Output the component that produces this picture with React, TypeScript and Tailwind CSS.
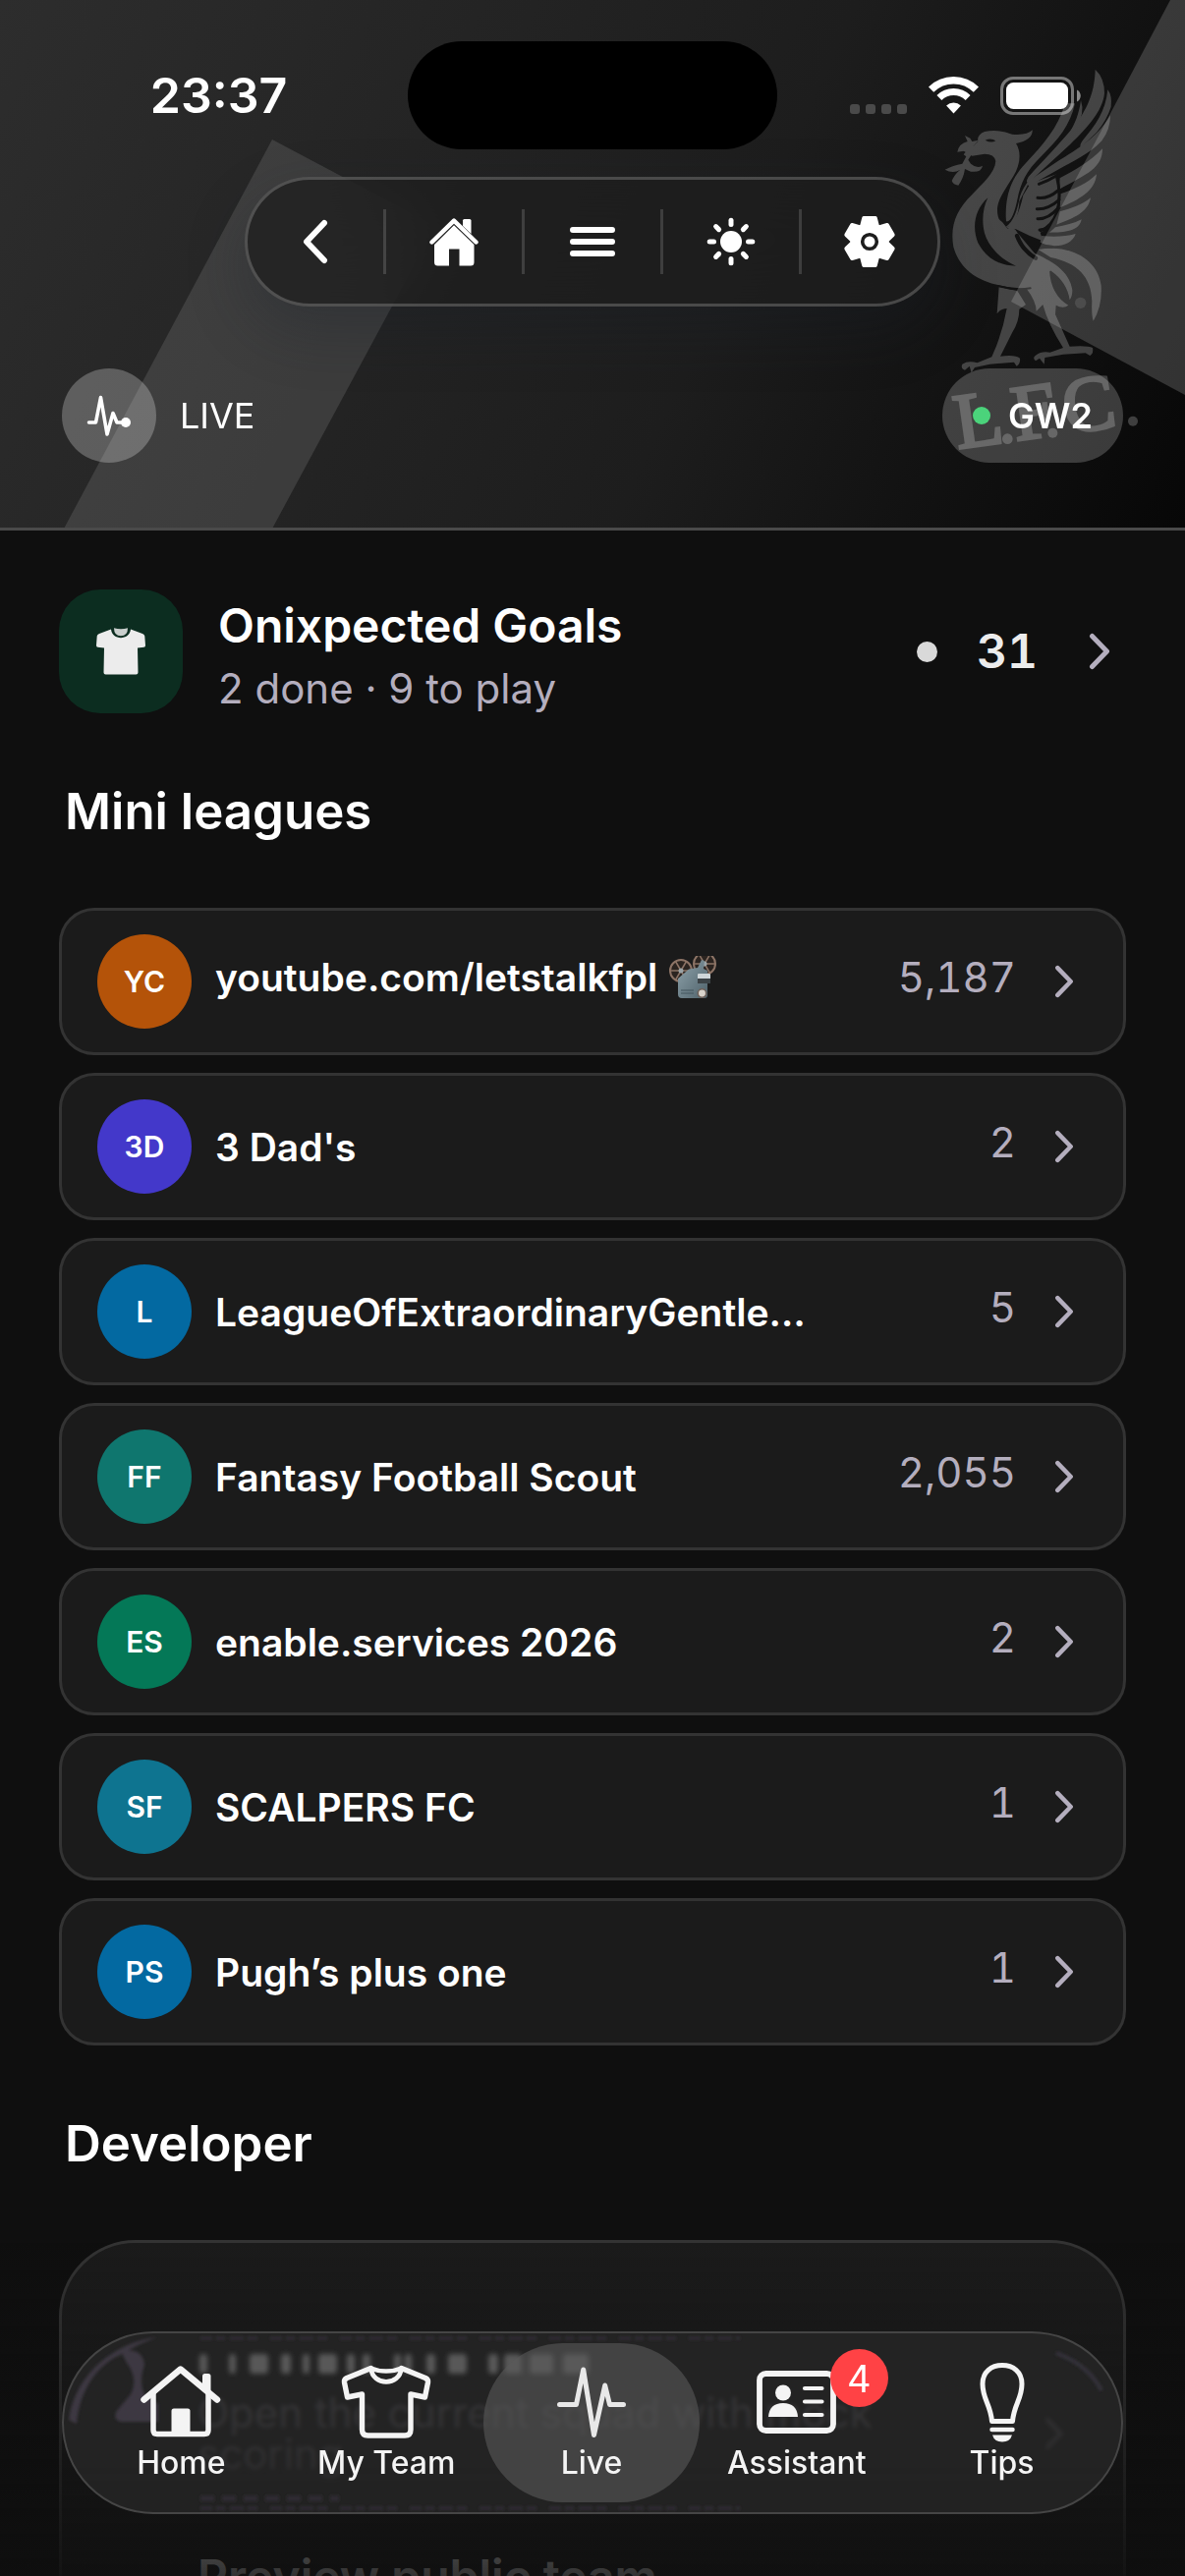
import React from "react";

type League = {
  initials: string;
  name: string;
  rank: string;
  color: string;
  projector?: boolean;
};

const leagues: League[] = [
  { initials: "YC", name: "youtube.com/letstalkfpl", rank: "5,187", color: "bg-[#b45309]", projector: true },
  { initials: "3D", name: "3 Dad's", rank: "2", color: "bg-[#4338ca]" },
  { initials: "L", name: "LeagueOfExtraordinaryGentlemen", rank: "5", color: "bg-[#0369a1]" },
  { initials: "FF", name: "Fantasy Football Scout", rank: "2,055", color: "bg-[#0f766e]" },
  { initials: "ES", name: "enable.services 2026", rank: "2", color: "bg-[#047857]" },
  { initials: "SF", name: "SCALPERS FC", rank: "1", color: "bg-[#0e7490]" },
  { initials: "PS", name: "Pugh’s plus one", rank: "1", color: "bg-[#0369a1]" },
];

/* ---------- status bar ---------- */

function WifiIcon() {
  return (
    <svg width="51" height="38" viewBox="0 0 51 38" fill="none" stroke="#fff" aria-hidden="true">
      <path d="M2.6 13.2a32.5 32.5 0 0 1 45.8 0" strokeWidth="7.4" />
      <path d="M10.9 21.6a20.8 20.8 0 0 1 29.2 0" strokeWidth="7" />
      <path d="M25.5 37.6l-7.4-8a10.6 10.6 0 0 1 14.8 0z" fill="#fff" stroke="none" />
    </svg>
  );
}

function BatteryIcon() {
  return (
    <svg width="82" height="39" viewBox="0 0 82 39" aria-hidden="true">
      <rect x="1.5" y="1.5" width="72" height="36" rx="11.5" fill="none" stroke="#fff" strokeOpacity=".42" strokeWidth="3" />
      <rect x="6" y="6" width="63" height="27" rx="7.5" fill="#fff" />
      <path d="M78 13.5c5 2 5 10 0 12z" fill="#fff" fillOpacity=".5" />
    </svg>
  );
}

/* ---------- header drawings ---------- */

function Beams() {
  return (
    <svg
      className="pointer-events-none absolute inset-0 h-full w-full"
      viewBox="0 0 1206 537"
      preserveAspectRatio="xMaxYMin slice"
      aria-hidden="true"
    >
      <path d="M277 142L443 230 276 540H64z" fill="#fff" fillOpacity=".115" />
      <path d="M1191 0L1029 307 1206 402V0z" fill="#fff" fillOpacity=".17" />
    </svg>
  );
}

function Crest() {
  return (
    <svg
      className="pointer-events-none absolute right-0 top-[40px]"
      width="286"
      height="440"
      viewBox="0 0 858 1320"
      aria-hidden="true"
    >
      <defs>
        <mask id="crest-cuts" maskUnits="userSpaceOnUse" x="0" y="0" width="858" height="1320">
          <rect width="858" height="1320" fill="#fff" />
          <path d="M256 484C215 520 207 575 226 622C250 668 292 692 342 692C296 672 258 634 246 592C236 552 242 512 256 484z" fill="#000" />
          <path d="M248 308q18-8 32 2q-14 8-32-2z" fill="#000" />
          <g fill="none" stroke="#000" strokeWidth="9" strokeLinecap="round">
            <path d="M345 600Q362 645 402 668" strokeWidth="13" />
            <path d="M365 598Q400 632 452 634" strokeWidth="9" />
            <path d="M412 442Q440 432 466 416" />
            <path d="M466 416Q482 480 466 530Q452 570 418 584" />
            <path d="M408 484Q440 488 470 462" />
            <path d="M406 518Q440 520 474 490" />
            <path d="M408 548Q440 550 470 516" />
            <path d="M414 582Q442 582 460 552" />
            <path d="M290 754Q340 768 386 760" strokeWidth="6" />
          </g>
        </mask>
      </defs>
      <g fill="#fff" opacity=".21">
        <g mask="url(#crest-cuts)">
          {/* head, neck and breast */}
          <path d="M392 277Q394 308 342 318C360 346 354 386 334 418C310 458 288 486 285 516Q284 552 300 558L316 578Q334 568 346 590L400 655L448 706L386 760Q338 764 296 752C218 738 168 696 151 634C140 570 160 520 208 474C240 440 278 408 280 372Q276 350 246 350L208 356L180 340Q186 330 212 326L226 312Q222 292 246 282Q290 274 330 290Q376 294 392 277z" />
          {/* beak and sprig */}
          <path d="M163 344Q168 318 194 312L186 294L202 302L208 312L228 308L212 326L210 346L196 368L204 380Q222 396 240 386Q236 408 204 404L186 396Q182 424 166 446Q150 444 146 432Q156 410 172 398Q150 412 125 398Q150 384 178 380L190 358L182 352L192 340z" />
          {/* long primaries */}
          <path d="M312 556C308 486 322 430 372 378C424 322 470 272 492 196L522 196C508 262 470 308 420 356C372 402 356 440 346 490C338 530 326 560 312 556z" />
          <path d="M310 574C336 556 346 520 354 480C366 442 396 412 432 374C488 318 530 266 540 186Q554 226 524 272C500 316 430 388 386 428L352 496C350 540 336 574 310 574z" />
          <path d="M584 92Q612 118 612 164C608 216 560 270 508 320L380 438Q370 438 380 420C420 376 474 322 522 262C556 216 582 168 584 92z" />
          <path d="M622 154Q636 172 632 206Q620 246 588 284L540 330Q534 324 546 308C584 264 616 220 622 154z" />
          <path d="M630 232Q630 276 604 310C562 354 512 374 474 396L382 448Q368 442 390 426L470 372C530 336 590 300 630 232z" />
          {/* secondaries */}
          <path d="M606 334C606 392 560 412 474 458L476 424C520 400 566 376 606 334z" />
          <path d="M588 412C584 462 536 490 476 514L478 472C520 458 560 440 588 412z" />
          <path d="M570 484C562 528 520 546 466 566L476 526C510 516 544 506 570 484z" />
          <path d="M542 550C536 586 490 590 444 590L462 574C492 568 520 562 542 550z" />
          <path d="M524 594C512 632 456 640 416 620L420 600C460 604 494 602 524 594z" />
          {/* coverts */}
          <path d="M364 476L386 440L466 412Q486 470 466 530Q452 574 416 590L424 616Q380 600 342 580L312 576Q346 560 364 476z" />
          {/* tail */}
          <path d="M410 642C500 624 592 668 602 752Q606 814 578 860Q572 842 574 800C572 724 528 682 448 666z" />
          <path d="M392 650C450 676 506 706 514 766Q514 786 506 796Q498 742 450 708L396 668z" />
          {/* legs and feet */}
          <path d="M290 756L346 768L372 810L352 824Q352 862 330 896L294 968Q340 962 354 974Q356 990 344 998L336 986L262 992L216 1002L206 1018L200 998L186 1010Q172 1004 178 992Q196 980 224 988L268 970Q300 900 314 822Q296 822 284 838z" />
          <path d="M372 758L444 704Q448 780 502 812Q486 824 464 812L462 840L506 938Q560 934 576 942Q580 958 568 966L554 958L486 962L430 972L428 992L414 974L402 982Q390 972 404 964Q418 952 446 956L486 942Q440 870 424 810L404 830Q404 800 372 758z" />
        </g>
        <circle cx="539" cy="805" r="17" opacity=".5" />
        <g
          fontFamily="Liberation Serif, serif"
          fontSize="240"
          stroke="#fff"
          strokeWidth="9"
          transform="rotate(-8 170 1255)"
        >
          <text x="166" y="1250">L</text>
          <text x="344" y="1250">F</text>
          <text x="500" y="1250">C</text>
        </g>
        <circle cx="316" cy="1220" r="16" />
        <circle cx="454" cy="1202" r="15" />
        <circle cx="699" cy="1166" r="15" />
      </g>
    </svg>
  );
}

function BackIcon() {
  return (
    <svg width="26" height="46" viewBox="0 0 26 46" fill="none" stroke="#fff" strokeWidth="6" strokeLinecap="round" strokeLinejoin="round" aria-hidden="true">
      <path d="M22 4L4 23l18 19" />
    </svg>
  );
}

function HouseSolidIcon() {
  return (
    <svg width="50" height="50" viewBox="0 0 50 50" fill="#fff" aria-hidden="true">
      <path d="M2.5 25.5L25 3.6 47.5 25.5" fill="none" stroke="#fff" strokeWidth="4.4" strokeLinecap="round" strokeLinejoin="round" />
      <path d="M34 3.5q0-1.5 1.500-1.500h5.500q1.500 0 1.500 1.500V17L34 9z" />
      <path d="M25 8.300L45.500 28v18q0 3.500-3.500 3.500H30.500V32.500h-10.500v17H8.500q-3.500 0-3.500-3.500V28z" />
    </svg>
  );
}

function MenuIcon() {
  return (
    <svg width="46" height="36" viewBox="0 0 46 36" stroke="#fff" strokeWidth="6" strokeLinecap="round" aria-hidden="true">
      <path d="M3 6h40M3 18h40M3 30h40" />
    </svg>
  );
}

const rayAngles = [0, 45, 90, 135, 180, 225, 270, 315];

function SunIcon() {
  return (
    <svg width="50" height="50" viewBox="-25 -25 50 50" aria-hidden="true">
      <circle r="11" fill="#fff" />
      <g stroke="#fff" strokeWidth="5" strokeLinecap="round">
        {rayAngles.map((a) => (
          <path key={a} d="M0-17.500V-21.800" transform={`rotate(${a})`} />
        ))}
      </g>
    </svg>
  );
}

const toothAngles = [0, 60, 120, 180, 240, 300];

function GearIcon() {
  return (
    <svg width="54" height="54" viewBox="-27 -27 54 54" aria-hidden="true">
      <circle r="19.500" fill="#fff" />
      <g fill="#fff" stroke="#fff" strokeWidth="4" strokeLinejoin="round">
        {toothAngles.map((a) => (
          <path key={a} d="M-5.800-24H5.800L8-15.500H-8z" transform={`rotate(${a})`} />
        ))}
      </g>
      <circle r="7.300" fill="none" stroke="#1d1d1d" strokeWidth="3.600" />
    </svg>
  );
}

function LiveDotIcon() {
  return (
    <svg width="46" height="44" viewBox="0 0 46 44" fill="none" stroke="#fff" strokeWidth="3.600" strokeLinecap="round" strokeLinejoin="round" aria-hidden="true">
      <path d="M2.500 29H9.500L14.500 3.500 21 41 27 19.500 31 29H38" />
      <circle cx="40" cy="29" r="5" fill="#fff" stroke="none" />
    </svg>
  );
}

/* ---------- content drawings ---------- */

function ShirtSolidIcon() {
  return (
    <svg width="52" height="50" viewBox="0 0 52 50" fill="#ececec" aria-hidden="true">
      <path d="M16 2.500C17 14 35 14 36 2.500L48 7q2 .8 2.300 2.600L51 19q0 1.500-1.500 1.700L43 21.500l.5 25q0 2-2 2h-31q-2 0-2-2l.5-25-6.500-.8Q1 20.500 1 19l.7-9.400Q2 7.800 4 7z" />
      <path d="M19 1.200q7 2 14 0q0 8-7 8t-7-8z" opacity=".85" />
    </svg>
  );
}

function Chevron({ large = false }: { large?: boolean }) {
  return (
    <svg
      className={large ? "h-[38px] w-[22px] shrink-0" : "h-[34px] w-[20px] shrink-0"}
      viewBox="0 0 22 38"
      fill="none"
      stroke="#b4aebe"
      strokeWidth="5"
      strokeLinecap="round"
      strokeLinejoin="round"
      aria-hidden="true"
    >
      <path d="M3.500 3.500L18.500 19l-15 15.500" />
    </svg>
  );
}

function Reel({ cx, cy }: { cx: number; cy: number }) {
  return (
    <g stroke="#8d7466" fill="none">
      <circle cx={cx} cy={cy} r="11" strokeWidth="2" fill="#2b2420" />
      <path
        d={`M${cx - 11} ${cy}h22M${cx - 5.500} ${cy - 9.500}l11 19M${cx + 5.500} ${cy - 9.500}l-11 19`}
        strokeWidth="1.500"
      />
      <circle cx={cx} cy={cy} r="2.500" fill="#9aa3a6" stroke="none" />
    </g>
  );
}

function ProjectorIcon() {
  return (
    <svg className="shrink-0" width="48" height="44" viewBox="0 0 48 44" role="img" aria-label="film projector">
      <defs>
        <linearGradient id="projector-body" x1="0" y1="0" x2="1" y2="1">
          <stop offset="0" stopColor="#8fa3ab" />
          <stop offset="1" stopColor="#4f626b" />
        </linearGradient>
      </defs>
      <Reel cx={12} cy={15} />
      <Reel cx={36} cy={8} />
      <path d="M9 23L20 13.500l9-1.500 4-8 3 1-1 8 4 2v25q0 3-3 3H13q-4 0-4-4z" fill="url(#projector-body)" />
      <path d="M12 35h13M12 38h13" stroke="#43545c" strokeWidth="1.200" />
      <rect x="29" y="18" width="13" height="10" rx="1" fill="#cfd6d9" />
      <rect x="29" y="23" width="13" height="5" fill="#3c4347" />
      <circle cx="33.500" cy="38" r="4.200" fill="#d8d3cb" stroke="#6d5f58" strokeWidth="1.500" />
    </svg>
  );
}

/* ---------- tab bar drawings ---------- */

function HomeIcon() {
  return (
    <svg width="82" height="76" viewBox="0 0 82 76" fill="none" stroke="#f4f4f4" aria-hidden="true">
      <path d="M3.500 35.500L40.700 4.500 78 35.500" strokeWidth="6.500" strokeLinecap="round" strokeLinejoin="round" />
      <path d="M13 29v37.500q0 4 4 4h48q4 0 4-4V29" strokeWidth="5.500" />
      <path d="M63 26V11.500q0-2.500 2.500-2.500h3.500q2.500 0 2.500 2.500V33z" fill="#f4f4f4" stroke="none" />
      <path d="M31.500 70V47q0-2.500 2.500-2.500h14q2.500 0 2.500 2.500v23z" fill="#f4f4f4" stroke="none" />
    </svg>
  );
}

function ShirtIcon() {
  return (
    <svg width="92" height="78" viewBox="0 0 92 78" fill="none" stroke="#f4f4f4" strokeWidth="5.400" strokeLinejoin="round" strokeLinecap="round" aria-hidden="true">
      <path d="M30.500 4.500L6 14.500q-3 1.500-2.500 4.500L6.500 34 21.500 31V67q0 6 6 6H65q6 0 6-6V31l14.500 3L88.500 19q.5-3-2.500-4.500L61.500 4.500" />
      <path d="M30.500 4.500C32 23 60 23 61.500 4.500C52 8.500 40 8.500 30.500 4.500" strokeWidth="4.600" />
    </svg>
  );
}

function PulseIcon() {
  return (
    <svg width="70" height="74" viewBox="0 0 70 74" fill="none" stroke="#e8e8e8" strokeWidth="5" strokeLinecap="round" strokeLinejoin="round" aria-hidden="true">
      <path d="M2.500 39.500H19.500L26.700 4 37.500 70.500 48.700 20 53.500 39.500H67.500" />
    </svg>
  );
}

function AssistantIcon() {
  return (
    <svg width="82" height="66" viewBox="0 0 82 66" aria-hidden="true">
      <rect x="3" y="4" width="75" height="58" rx="6.500" fill="none" stroke="#f4f4f4" strokeWidth="5.800" />
      <circle cx="27" cy="23.500" r="8" fill="#f4f4f4" />
      <path d="M12 48q1-14 15-14t15 14z" fill="#f4f4f4" />
      <path d="M49 19h17.500M49 32.500h17.500M49 46h17.500" stroke="#f4f4f4" strokeWidth="4.200" strokeLinecap="round" />
    </svg>
  );
}

function BulbIcon() {
  return (
    <svg width="46" height="82" viewBox="0 0 46 82" fill="none" stroke="#f4f4f4" aria-hidden="true">
      <path d="M12.500 60.500C11 43 3 38 3 22.500C3 10 12 3.500 23 3.500S43 10 43 22.500C43 38 35 43 33.500 60.500z" strokeWidth="5" strokeLinejoin="round" />
      <path d="M12.500 69h21" strokeWidth="4.500" strokeLinecap="round" />
      <path d="M13 74.500h20q-2 7-10 7t-10-7z" fill="#f4f4f4" stroke="none" />
    </svg>
  );
}

const smears = [
  { x: 138, w: 8 },
  { x: 168, w: 7 },
  { x: 189, w: 19 },
  { x: 221, w: 10 },
  { x: 243, w: 7 },
  { x: 259, w: 19 },
  { x: 288, w: 8 },
  { x: 304, w: 8 },
  { x: 336, w: 7 },
  { x: 347, w: 7 },
  { x: 369, w: 9 },
  { x: 391, w: 19 },
  { x: 432, w: 10 },
  { x: 448, w: 18 },
  { x: 474, w: 24 },
  { x: 508, w: 26 },
];

function GlassRefraction() {
  return (
    <svg className="pointer-events-none absolute left-0 top-0 h-full w-full" aria-hidden="true">
      <defs>
        <filter id="smear" x="-20%" y="-50%" width="140%" height="200%">
          <feGaussianBlur stdDeviation="2.5" />
        </filter>
        <filter id="rim" x="-20%" y="-20%" width="140%" height="140%">
          <feGaussianBlur stdDeviation="1.5" />
        </filter>
      </defs>
      <g filter="url(#smear)" fill="#585858">
        {smears.map((s) => (
          <rect key={s.x} x={s.x} y="21" width={s.w} height="20" rx="4" />
        ))}
      </g>
      <g filter="url(#rim)" fill="#3c3842">
        <path d="M95 4C56 8 12 38 5 88L13 92C16 58 34 30 62 20Q76 10 95 4z" />
        <path d="M58 18Q80 14 82 32Q76 50 82 62L96 72V90H58Q50 88 53 80L68 62Q76 46 64 30z" />
      </g>
      <g filter="url(#rim)" fill="none" stroke="#302e36" strokeWidth="3">
        <path d="M139 5H688" strokeDasharray="12 4 9 5 14 4 10 13" />
        <path d="M139 178H688" strokeDasharray="12 4 9 5 14 4 10 13" />
        <path d="M139 168H280" strokeWidth="6" strokeDasharray="14 8" stroke="#2d2b32" />
      </g>
      <path d="M1010 20Q1042 32 1056 58" fill="none" stroke="#34313b" strokeWidth="4" filter="url(#rim)" />
    </svg>
  );
}

const tools = [
  { label: "Back", icon: <BackIcon /> },
  { label: "Home", icon: <HouseSolidIcon /> },
  { label: "Menu", icon: <MenuIcon /> },
  { label: "Brightness", icon: <SunIcon /> },
  { label: "Settings", icon: <GearIcon /> },
];

const tabs = [
  { label: "Home", icon: <HomeIcon /> },
  { label: "My Team", icon: <ShirtIcon /> },
  { label: "Live", icon: <PulseIcon />, active: true },
  { label: "Assistant", icon: <AssistantIcon />, badge: "4" },
  { label: "Tips", icon: <BulbIcon /> },
];

function StatusBar() {
  return (
    <div className="relative grid grid-cols-[1fr_376px_1fr] pt-[42px] text-white">
      <div className="flex h-[110px] items-center justify-center pl-[30px] text-[50px] leading-none font-semibold">
        23:37
      </div>
      <div className="h-[110px] rounded-full bg-black" />
      <div className="flex h-[110px] items-center justify-end pr-[106px]">
        <div className="mt-[27px] mr-[22px] flex gap-[6px]">
          <span className="size-[10px] rounded-[3px] bg-[#4a4a4a]" />
          <span className="size-[10px] rounded-[3px] bg-[#4a4a4a]" />
          <span className="size-[10px] rounded-[3px] bg-[#4a4a4a]" />
          <span className="size-[10px] rounded-[3px] bg-[#4a4a4a]" />
        </div>
        <WifiIcon />
        <div className="ml-[22px]">
          <BatteryIcon />
        </div>
      </div>
    </div>
  );
}

function Header() {
  return (
    <header className="relative shrink-0 overflow-hidden border-b-[3px] border-[#4a4a4a] bg-linear-[115deg] from-[#2d2d2d] via-[#1d1d1d] via-60% to-[#070707]">
      <Beams />
      <Crest />
      <StatusBar />
      <nav
        aria-label="Quick actions"
        className="relative mx-auto mt-[28px] flex w-fit items-center overflow-hidden rounded-full border-[3px] border-white/20 bg-[#1e1e1e]/75 shadow-[0_24px_60px_rgba(28,32,42,0.3)] backdrop-blur-[30px]"
      >
        {tools.map((tool, i) => (
          <React.Fragment key={tool.label}>
            {i > 0 && <span className="h-[66px] w-[3px] bg-white/15" />}
            <button type="button" aria-label={tool.label} className="flex h-[126px] w-[138px] items-center justify-center">
              {tool.icon}
            </button>
          </React.Fragment>
        ))}
      </nav>
      <div className="relative mt-[63px] mb-[66px] flex items-center justify-between px-[63px]">
        <div className="flex items-center gap-[24px]">
          <span className="flex size-[96px] items-center justify-center rounded-full bg-white/25">
            <LiveDotIcon />
          </span>
          <span className="text-[36px] leading-none text-white">LIVE</span>
        </div>
        <button type="button" className="flex h-[96px] items-center gap-[18px] rounded-full bg-white/20 px-[31px]">
          <span className="size-[18px] rounded-full bg-[#4bd37b]" />
          <span className="text-[36px] leading-none font-semibold text-white">GW2</span>
        </button>
      </div>
    </header>
  );
}

function LeagueRow({ league }: { league: League }) {
  return (
    <li>
      <a
        href="#league"
        className="flex h-[150px] items-center rounded-[36px] border-[3px] border-[#333333] bg-[#1b1b1b] pr-[50px] pl-[36px]"
      >
        <span className={`flex size-[96px] shrink-0 items-center justify-center rounded-full text-[30px] leading-none font-semibold text-white ${league.color}`}>
          {league.initials}
        </span>
        <span className={`ml-[24px] flex w-[620px] min-w-0 items-center gap-[12px] ${league.projector ? "pb-[8px]" : "pt-[2px]"}`}>
          <span className="truncate text-[39px] leading-[54px] font-semibold text-white">{league.name}</span>
          {league.projector && <ProjectorIcon />}
        </span>
        <span className="ml-auto pb-[8px] pl-[24px] text-[42px] leading-[50px] text-[#b4aebe] tabular-nums">
          {league.rank}
        </span>
        <span className="ml-[39px]">
          <Chevron />
        </span>
      </a>
    </li>
  );
}

function TabBar() {
  return (
    <nav
      aria-label="Main"
      className="fixed inset-x-[63px] bottom-[63px] flex h-[186px] rounded-full border-[2px] border-[#454545] bg-[#262626]/85 pr-[17px] pl-[15px] backdrop-blur-[2px]"
    >
      <GlassRefraction />
      {tabs.map((tab) => (
        <button
          key={tab.label}
          type="button"
          aria-current={tab.active ? "page" : undefined}
          className="relative flex flex-1 flex-col items-center pt-[26px]"
        >
          {tab.active && <span className="absolute -inset-x-[6px] inset-y-[10px] rounded-full bg-[#5a5a5a]/60" />}
          <span className="relative flex h-[87px] items-center">
            {tab.icon}
            {tab.badge && (
              <span className="absolute -top-[10px] left-[75px] flex size-[59px] items-center justify-center rounded-full bg-[#ff4245] text-[38px] leading-none text-white">
                {tab.badge}
              </span>
            )}
          </span>
          <span className="relative text-[32px] leading-[38px] font-medium whitespace-nowrap text-[#f4f4f4]">{tab.label}</span>
        </button>
      ))}
    </nav>
  );
}

export default function App() {
  return (
    <div className="flex h-screen flex-col overflow-hidden bg-[#0f0f0f] font-['Inter',sans-serif]">
      <Header />
      <main className="min-h-0 flex-1 overflow-y-auto px-[60px] pt-[60px] [scrollbar-width:none]">
        <a href="#team" className="flex h-[126px] items-center pr-[16px]">
          <span className="flex size-[126px] shrink-0 items-center justify-center rounded-[42px] bg-[#0c2d20]">
            <ShirtSolidIcon />
          </span>
          <span className="ml-[36px] flex flex-col pt-[12px]">
            <span className="text-[48px] leading-[64px] font-semibold text-white">Onixpected Goals</span>
            <span className="text-[42px] leading-[64px] text-[#b4aebe]">2 done · 9 to play</span>
          </span>
          <span className="ml-auto size-[21px] rounded-full bg-[#d9d9d9]" />
          <span className="ml-[40px] text-[48px] leading-none font-semibold text-[#ececec] tabular-nums">31</span>
          <span className="ml-[52px]">
            <Chevron large />
          </span>
        </a>

        <h2 className="mt-[68px] px-[6px] text-[51px] leading-[64px] font-semibold text-white">Mini leagues</h2>
        <ul className="mt-[66px] flex flex-col gap-[18px]">
          {leagues.map((league) => (
            <LeagueRow key={league.initials} league={league} />
          ))}
        </ul>

        <h2 className="mt-[68px] px-[6px] text-[51px] leading-[64px] font-semibold text-white">Developer</h2>
        <section className="mt-[66px] rounded-[78px] border-[3px] border-[#333333] bg-[#1b1b1b] pb-[120px]">
          <a href="#preview-squad" className="flex items-center pt-[152px] pr-[60px] pl-[138px]">
            <span className="w-[720px] text-[42px] leading-[42px] text-[#d8d2e4]">
              Open the current squad with mock scoring
            </span>
            <span className="ml-auto">
              <Chevron />
            </span>
          </a>
          <a href="#preview-team" className="block pt-[74px] pl-[138px] text-[48px] leading-[60px] font-semibold text-white">
            Preview public team
          </a>
        </section>
      </main>
      <div className="pointer-events-none fixed inset-x-0 bottom-0 h-[340px] bg-linear-to-b from-[#0f0f0f]/0 via-[#0f0f0f]/40 to-[#0f0f0f]/85" />
      <TabBar />
    </div>
  );
}
